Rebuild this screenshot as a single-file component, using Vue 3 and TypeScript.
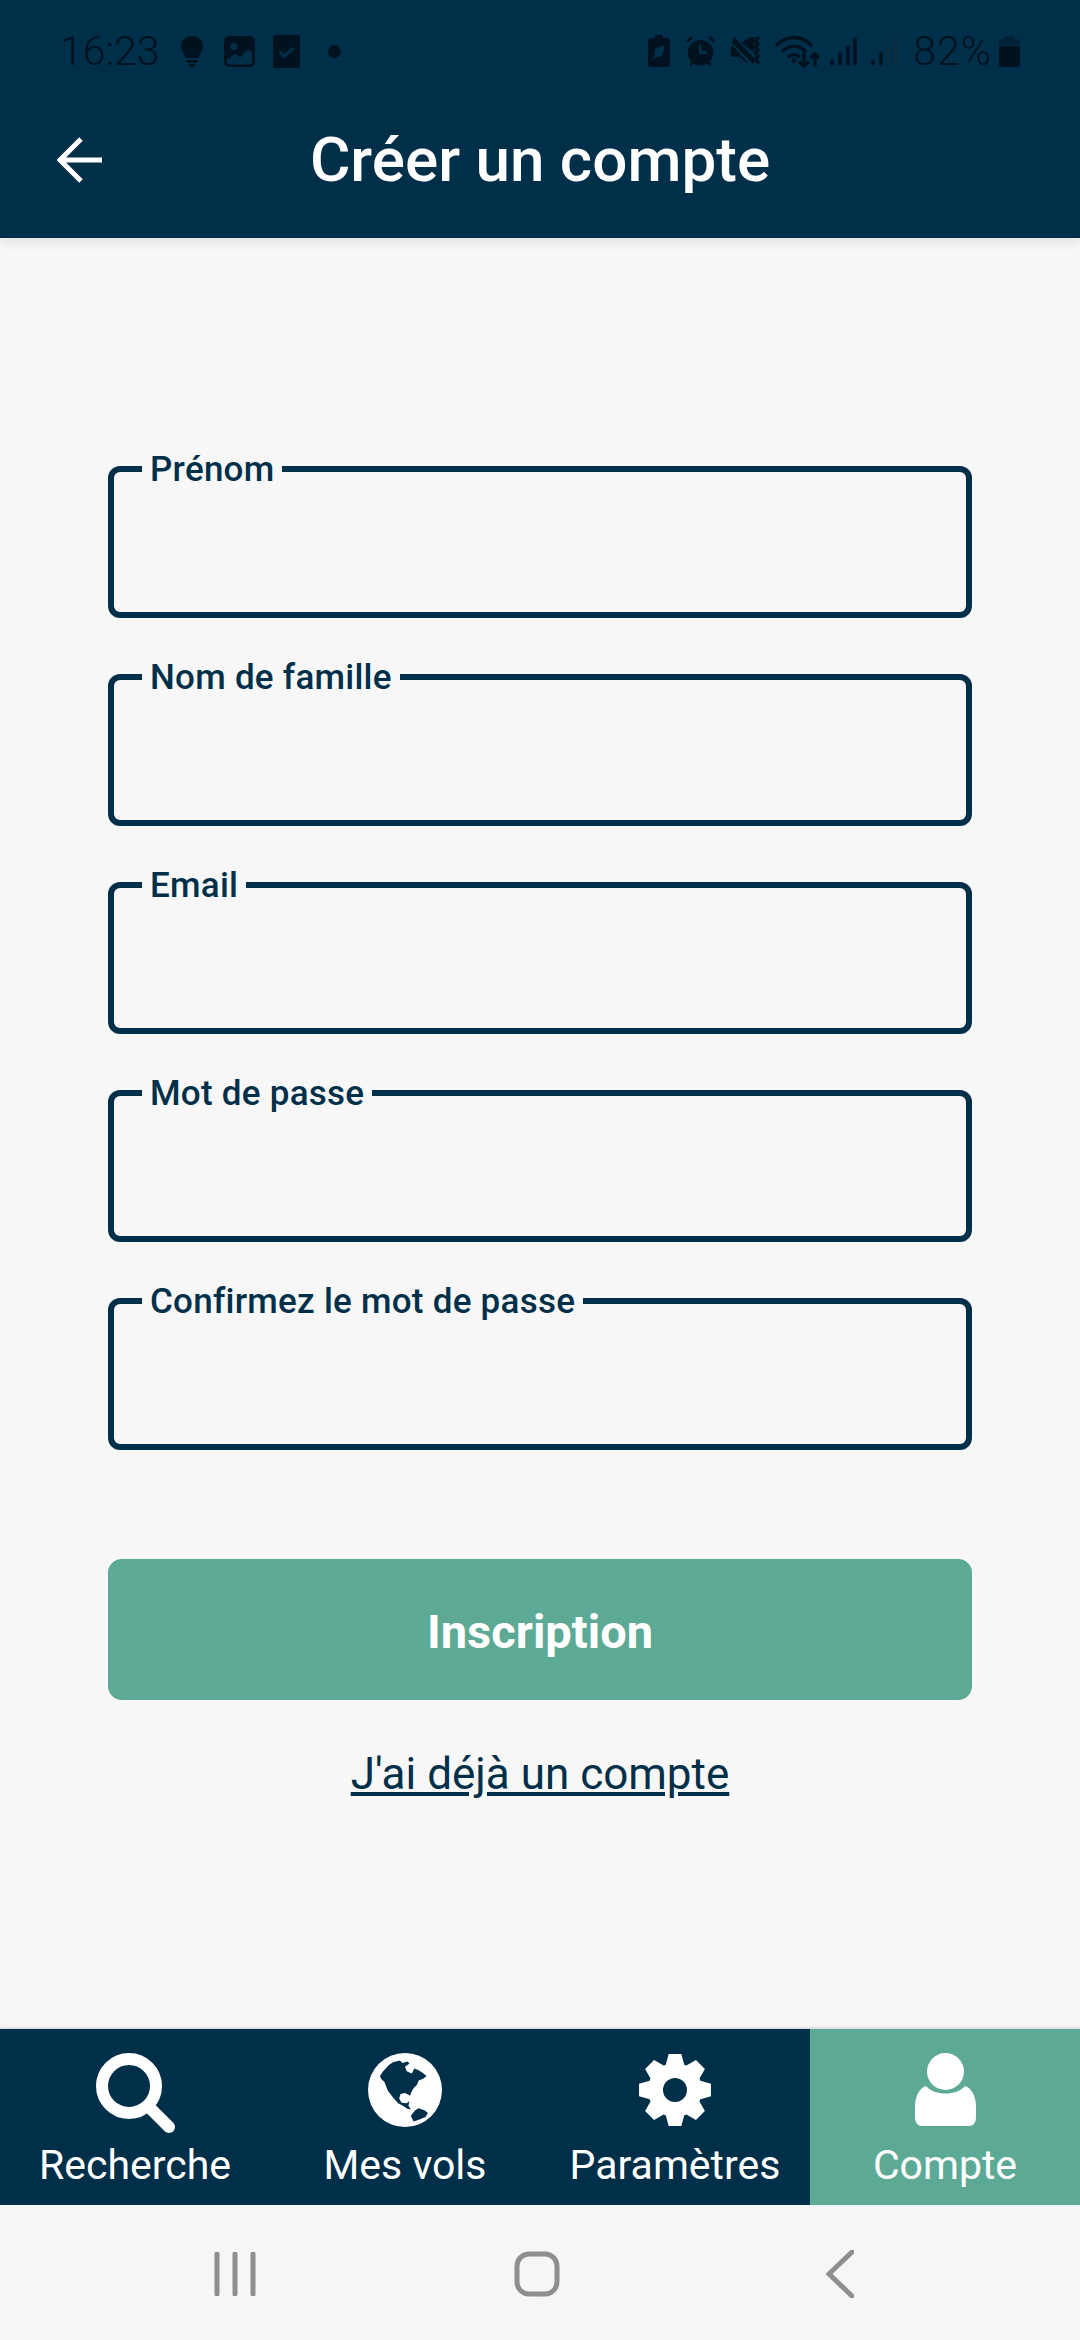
<template>
  <div class="screen">
    <header class="top">
      <div class="status">
        <div class="status-left">
          <span class="clock">16:23</span>
          <svg class="st bulb" width="22" height="31" viewBox="0 0 22 31"><path d="M11 0C4.500 0 0 4.500 0 10.500c0 4 2 6.500 4 9V22h14v-2.500c2-2.500 4-5 4-9C22 4.500 17.500 0 11 0zM5 24h12l-1.500 3h-9zM8 28h6l-1 3H9z" /></svg>
          <svg class="st image" width="31" height="31" viewBox="0 0 31 31"><path fill-rule="evenodd" d="M5 0h21a5 5 0 0 1 5 5v21a5 5 0 0 1-5 5H5a5 5 0 0 1-5-5V5a5 5 0 0 1 5-5zM10 7a3.500 3.500 0 1 0 0 7 3.500 3.500 0 0 0 0-7zM3 23.500V26a2.500 2.500 0 0 0 2.500 2.500h20A2.500 2.500 0 0 0 28 26v-9.500L24 13l-8 8.500-4.500-3.500z" /></svg>
          <svg class="st check" width="27" height="33" viewBox="0 0 27 33"><path fill-rule="evenodd" d="M2 0h23a2 2 0 0 1 2 2v29a2 2 0 0 1-2 2H2a2 2 0 0 1-2-2V2a2 2 0 0 1 2-2zM7.500 15.500l-2 2.200 6 5.800 10-9.500-2-2.200-8 7.500z" /></svg>
          <i class="dot"></i>
        </div>
        <div class="status-right">
          <svg class="st" width="22" height="32" viewBox="0 0 22 32"><path fill-rule="evenodd" d="M7 0h8v3h4a3 3 0 0 1 3 3v23a3 3 0 0 1-3 3H3a3 3 0 0 1-3-3V6a3 3 0 0 1 3-3h4zM16.500 11c-6 0-10 2-10 7 0 1 .2 2 .6 2.600L4 24l1 1 3.500-3.200C13 23 16.500 19 16.500 11z" /></svg>
          <svg class="st" width="29" height="30" viewBox="0 0 29 30"><path fill-rule="evenodd" d="M14.500 4a12.800 12.800 0 1 1 0 25.600 12.800 12.800 0 0 1 0-25.600zM13 9v9h8v-2.600h-5.400V9zM5 0l2 2-5 4.500L0 4.500zM24 0l5 4.500-2 2L22 2zM5.500 26l2 1.500-2.500 2.500L3 28zM23.500 26l2.500 2-2 2-2.500-2.500z" /></svg>
          <svg class="st" width="30" height="30" viewBox="0 0 30 30"><path d="M3 1l20 21v7L1 7zM0 10h2l15 17h-2l-6-6H2a2 2 0 0 1-2-2zM10 7l9-6h4v15z" /><path class="thin" d="M27 2l-2.500 3 2.500 3-2.500 3 2.500 3-2.500 3 2.500 3-2.500 3 2.500 3" /></svg>
          <svg class="st wifi" width="44" height="33" viewBox="0 0 44 33"><path class="thin" d="M2 10C12 0 26 0 36 10M8 16c7-6.500 15-6.500 22 0M14 21.500c3-2.500 7-2.500 10 0" /><circle cx="19" cy="25.500" r="2.300" /><path class="thin" d="M29 19v12M25 27.500l4 3.500 4-3.500M40 30V19M36.500 22l3.500-3.500 3 3.500" /></svg>
          <svg class="st sig" width="27" height="29" viewBox="0 0 27 29"><path class="bar" d="M2 24v3M10 17v10M18 10v17M25 2v25" /></svg>
          <svg class="st sig" width="27" height="29" viewBox="0 0 27 29"><path class="bar" d="M2 24v3M10 17v10" /><path class="bar off" d="M18 10v17M25 2v25" /></svg>
          <span class="pct">82%</span>
          <svg class="st batt" width="21" height="31" viewBox="0 0 21 31"><path d="M6 0h9v3h3a3 3 0 0 1 3 3v3H0V6a3 3 0 0 1 3-3h3z" opacity=".45" /><path d="M0 10h21v18a3 3 0 0 1-3 3H3a3 3 0 0 1-3-3z" /></svg>
        </div>
      </div>
      <div class="toolbar">
        <svg class="back" width="46" height="46" viewBox="0 0 46 46"><path d="M45 23H4M24 2L3 23l21 21" /></svg>
        <h1 class="title">Créer un compte</h1>
      </div>
    </header>

    <main class="form">
      <div v-for="f in fields" :key="f" class="field">
        <label class="field-label">{{ f }}</label>
        <input class="field-input" type="text" />
      </div>
      <button class="submit" type="button">Inscription</button>
      <a class="login" href="#">J'ai déjà un compte</a>
    </main>

    <nav class="tabs">
      <div class="tab">
        <div class="tab-icon">
          <svg width="80" height="80" viewBox="0 0 80 80"><circle cx="34" cy="33" r="27" class="ic-stroke" /><path d="M54 54l20 20" class="ic-stroke round" /></svg>
        </div>
        <span>Recherche</span>
      </div>
      <div class="tab">
        <div class="tab-icon">
          <svg width="74" height="74" viewBox="57 25 216 216">
            <circle cx="165" cy="133" r="108" fill="#fff" />
            <path fill="#002f4a" d="M92 92l8-12 18-20 12-8 20-5 8 7 14-4 6 6-13 9 5 13 15 7 7-15 13 5 10 7 13 10-10 8-13 5-5 13-10 10-7 12-3 10-15-8-13 3-4 13 7 12 15 2 8-7-3 13 7 12-10-2-12-8-15-8-15-17-15-20-10-25-10-10zM182 208l13-16 10-6 17 6 10 8-7 12-20 8-15 5-5-10z" />
          </svg>
        </div>
        <span>Mes vols</span>
      </div>
      <div class="tab">
        <div class="tab-icon">
          <svg width="74" height="74" viewBox="-37 -37 74 74"><path fill="#fff" fill-rule="evenodd" :d="gearPath" /></svg>
        </div>
        <span>Paramètres</span>
      </div>
      <div class="tab active">
        <div class="tab-icon">
          <svg width="61" height="73" viewBox="0 0 61 73"><ellipse cx="30.500" cy="18.500" rx="18.500" ry="18.500" fill="#fff" /><path fill="#fff" d="M11 33c4 5 12 7.500 19.500 7.500S46 38 50 33c7 2 11 11 11 21v10c0 6-3 9-7 9H7c-4 0-7-3-7-9V54c0-10 4-19 11-21z" /></svg>
        </div>
        <span>Compte</span>
      </div>
    </nav>

    <div class="sysnav">
      <svg width="44" height="44" viewBox="0 0 44 44"><path d="M4 2v40M22 2v40M40 2v40" /></svg>
      <svg class="home" width="46" height="46" viewBox="0 0 46 46"><rect x="3" y="3" width="40" height="40" rx="12" /></svg>
      <svg class="prev" width="28" height="48" viewBox="0 0 28 48"><path d="M26 2L3 24l23 22" /></svg>
    </div>
  </div>
</template>

<script setup lang="ts">
const fields: string[] = [
  'Prénom',
  'Nom de famille',
  'Email',
  'Mot de passe',
  'Confirmez le mot de passe',
]

// 8 dents, rayon ext. 36.5, rayon int. 27, trou 12
function buildGear(): string {
  const pt = (r: number, deg: number) => {
    const a = ((deg - 90) * Math.PI) / 180
    return `${(r * Math.cos(a)).toFixed(2)} ${(r * Math.sin(a)).toFixed(2)}`
  }
  let d = ''
  for (let i = 0; i < 8; i++) {
    const c = i * 45
    d += `${i === 0 ? 'M' : 'L'}${pt(27, c - 20)} L${pt(36.5, c - 10)} L${pt(36.5, c + 10)} L${pt(27, c + 20)} `
    d += `A27 27 0 0 1 ${pt(27, c + 25)} `
  }
  return d + 'Z M0 -12 A12 12 0 1 0 0 12 A12 12 0 1 0 0 -12 Z'
}

const gearPath = buildGear()
</script>

<style>
html, body {
  margin: 0;
  background: #f7f7f7;
}
</style>

<style scoped>
.screen {
  width: 1080px;
  height: 2340px;
  display: flex;
  flex-direction: column;
  overflow: hidden;
  font-family: Roboto, "Liberation Sans", sans-serif;
  background: #f7f7f7;
}

.top {
  height: 238px;
  background: #002f4a;
  box-shadow: 0 3px 12px rgba(0, 0, 0, 0.1);
  flex: none;
  position: relative;
}

.status {
  height: 100px;
  box-sizing: border-box;
  padding: 2px 60px 0 60px;
  display: flex;
  align-items: center;
  justify-content: space-between;
  color: #00121f;
}

.status-left, .status-right {
  display: flex;
  align-items: center;
}

.clock, .pct {
  font-size: 41px;
  font-weight: 300;
  line-height: 1;
}

.st {
  fill: #00121f;
  flex: none;
}

.thin {
  fill: none;
  stroke: #00121f;
  stroke-width: 3.500;
  stroke-linecap: round;
}

.bar {
  fill: none;
  stroke: #00121f;
  stroke-width: 3.500;
  stroke-linecap: round;
}

.bar.off {
  stroke: #0f2d40;
}

.status-left .bulb { margin-left: 21px; }
.status-left .image { margin-left: 21px; }
.status-left .check { margin-left: 18px; }

.dot {
  width: 13px;
  height: 13px;
  border-radius: 50%;
  background: #00121f;
  margin-left: 28px;
}

.status-right .st {
  margin-left: 16px;
}

.status-right .st:first-child {
  margin-left: 0;
}

.status-right .wifi {
  margin-left: 14px;
}

.status-right .wifi + .sig {
  margin-left: 11px;
}

.status-right .sig + .sig {
  margin-left: 14px;
}

.pct {
  margin-left: 15px;
  letter-spacing: 1px;
}

.status-right .batt {
  margin-left: 7px;
}

.toolbar {
  height: 138px;
  box-sizing: border-box;
  padding: 0 0 18px 57px;
  display: grid;
  grid-template-columns: 1fr auto 1fr;
  align-items: center;
}

.back {
  fill: none;
  stroke: #fff;
  stroke-width: 5;
}

.title {
  margin: 0 0 0 -57px;
  color: #fff;
  font-size: 62px;
  font-weight: 500;
  line-height: 1;
}

.form {
  flex: 1;
  box-sizing: border-box;
  padding: 228px 108px 0;
  display: flex;
  flex-direction: column;
  align-items: stretch;
}

.field {
  position: relative;
  height: 152px;
  margin-bottom: 56px;
}

.field-input {
  display: block;
  width: 100%;
  height: 100%;
  box-sizing: border-box;
  border: 6px solid #002f4a;
  border-radius: 12px;
  background: transparent;
  outline: none;
}

.field-label {
  position: absolute;
  left: 34px;
  top: -16px;
  padding: 0 8px;
  background: #f7f7f7;
  color: #002f4a;
  font-size: 35px;
  font-weight: 500;
  letter-spacing: 0.25px;
  line-height: 40px;
}

.submit {
  margin-top: 53px;
  height: 141px;
  padding: 4px 0 0;
  border: 0;
  border-radius: 14px;
  background: #5caa95;
  color: #fff;
  font-family: inherit;
  font-size: 47px;
  font-weight: 700;
}

.login {
  margin-top: 49px;
  align-self: center;
  color: #002f4a;
  font-size: 44px;
  line-height: 50px;
  text-decoration: underline;
}

.tabs {
  flex: none;
  height: 176px;
  display: flex;
  background: #002f4a;
  box-shadow: 0 -1px 3px rgba(0, 0, 0, 0.18);
}

.tab {
  flex: 1;
  display: flex;
  flex-direction: column;
  align-items: center;
  padding-top: 24px;
  box-sizing: border-box;
  color: #fff;
  font-size: 41px;
  line-height: 46px;
}

.tab-icon {
  height: 80px;
  display: flex;
  align-items: flex-start;
  justify-content: center;
}

.tab span {
  margin-top: 9px;
}

.tab.active {
  background: #5caa95;
}

.ic-stroke {
  fill: none;
  stroke: #fff;
  stroke-width: 12;
}

.ic-stroke.round {
  stroke-linecap: round;
}

.sysnav {
  flex: none;
  height: 135px;
  box-sizing: border-box;
  padding: 3px 0 0 213px;
  background: #f5f6f8;
  display: flex;
  align-items: center;
}

.sysnav svg {
  fill: none;
  stroke: #8e8e8e;
  stroke-width: 5;
  stroke-linecap: round;
}

.sysnav .home {
  margin-left: 257px;
}

.sysnav .prev {
  margin-left: 266px;
}
</style>
